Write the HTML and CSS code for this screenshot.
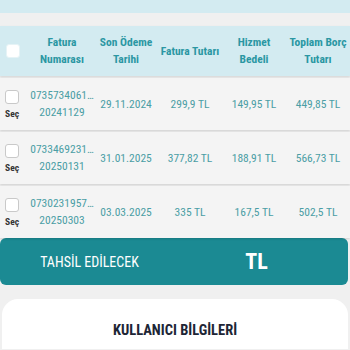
FILE: index.html
```html
<!DOCTYPE html>
<html lang="tr">
<head>
<meta charset="utf-8">
<link rel="stylesheet" href="styles.css">
</head>
<body>
<div class="topband"></div>
<div class="table">
  <div class="row head">
    <div class="c0"><span class="cb"></span></div>
    <div class="col">Fatura<br>Numarası</div>
    <div class="col">Son Ödeme<br>Tarihi</div>
    <div class="col">Fatura Tutarı</div>
    <div class="col">Hizmet<br>Bedeli</div>
    <div class="col">Toplam Borç<br>Tutarı</div>
  </div>
  <div class="row item">
    <div class="c0"><span class="cb"></span><span class="sec">Seç</span></div>
    <div class="col"><span class="num">0735734061…</span>20241129</div>
    <div class="col">29.11.2024</div>
    <div class="col">299,9 TL</div>
    <div class="col">149,95 TL</div>
    <div class="col">449,85 TL</div>
  </div>
  <div class="row item">
    <div class="c0"><span class="cb"></span><span class="sec">Seç</span></div>
    <div class="col"><span class="num">0733469231…</span>20250131</div>
    <div class="col">31.01.2025</div>
    <div class="col">377,82 TL</div>
    <div class="col">188,91 TL</div>
    <div class="col">566,73 TL</div>
  </div>
  <div class="row item">
    <div class="c0"><span class="cb"></span><span class="sec">Seç</span></div>
    <div class="col"><span class="num">0730231957…</span>20250303</div>
    <div class="col">03.03.2025</div>
    <div class="col">335 TL</div>
    <div class="col">167,5 TL</div>
    <div class="col">502,5 TL</div>
  </div>
</div>
<div class="total">
  <div class="half label">TAHSİL EDİLECEK</div>
  <div class="half amount">TL</div>
</div>
<div class="card">
  <div class="title">KULLANICI BİLGİLERİ</div>
</div>
</body>
</html>
```
FILE: styles.css
```css
* { box-sizing: border-box; }
html, body { margin: 0; padding: 0; }
body {
  width: 350px;
  height: 350px;
  overflow: hidden;
  background: #f0f0f0;
  font-family: "Roboto Condensed", "Liberation Sans Narrow", Roboto, sans-serif;
}
.topband {
  height: 13px;
  background: #d3ebf1;
  margin-bottom: 13px;
}
.table { display: flex; flex-direction: column; gap: 2px; }
.row {
  display: grid;
  grid-template-columns: 30px repeat(5, 64px);
  align-items: center;
}
.head {
  height: 50px;
  background: #d3ebf1;
  color: #2b97a3;
  font-size: 11.5px;
  font-weight: 700;
  line-height: 17px;
  box-shadow: 0 1px 2px rgba(0,0,0,0.12);
}
.item {
  height: 52px;
  background: #f4f4f4;
  color: #4b9ea5;
  font-size: 11.5px;
  line-height: 17px;
  box-shadow: 0 1px 2px rgba(0,0,0,0.14);
}
.col { text-align: center; white-space: nowrap; }
.num { display: block; }
.c0 {
  display: flex;
  flex-direction: column;
  align-items: flex-start;
  padding-left: 5px;
  gap: 4px;
}
.head .c0 { padding-left: 6px; }
.cb {
  width: 14px;
  height: 14px;
  border: 1px solid #c9c9c9;
  border-radius: 3px;
  background: #fff;
}
.head .cb { border-color: #e6f3f6; }
.sec {
  font-size: 9.5px;
  font-weight: 700;
  color: #333;
  line-height: 11px;
}
.total {
  display: flex;
  height: 47px;
  background: #1b8a93;
  border-radius: 6px;
  margin-right: 2px;
  color: #fff;
  align-items: center;
}
.half { flex: 1; text-align: center; white-space: nowrap; }
.label { font-size: 14px; padding-left: 6px; }
.amount { font-size: 22px; font-weight: 700; padding-right: 8px; }
.card {
  margin: 14px 2px 0 2px;
  background: #fff;
  border-radius: 16px 16px 0 0;
  height: 50px;
  padding-top: 23px;
}
.title {
  text-align: center;
  color: #1d2535;
  font-size: 14.5px;
  font-weight: 700;
}
```
